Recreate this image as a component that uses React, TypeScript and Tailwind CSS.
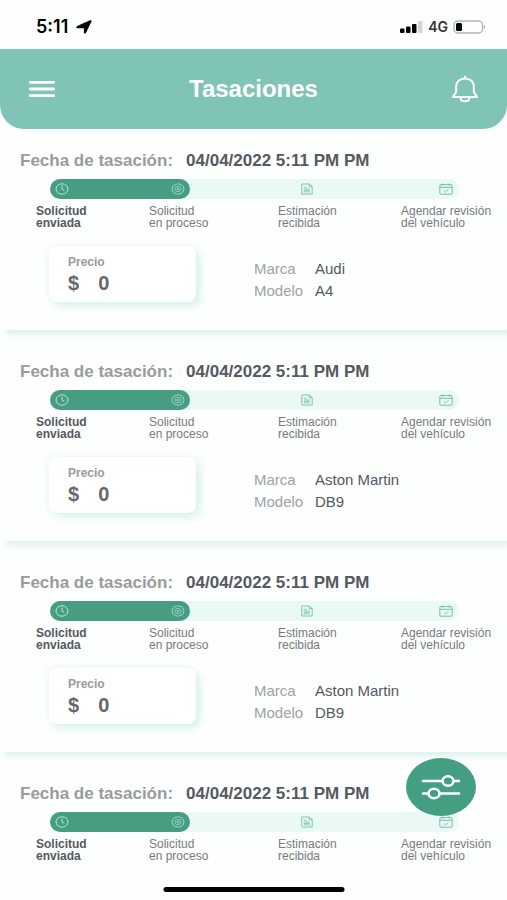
import type { ReactNode } from "react";

type Details = { price: number; brand: string; model: string };
type Appraisal = { id: number; date: string; details?: Details };

const appraisals: Appraisal[] = [
  { id: 1, date: "04/04/2022 5:11 PM PM", details: { price: 0, brand: "Audi", model: "A4" } },
  { id: 2, date: "04/04/2022 5:11 PM PM", details: { price: 0, brand: "Aston Martin", model: "DB9" } },
  { id: 3, date: "04/04/2022 5:11 PM PM", details: { price: 0, brand: "Aston Martin", model: "DB9" } },
  { id: 4, date: "04/04/2022 5:11 PM PM" },
];

const steps = [
  "Solicitud\nenviada",
  "Solicitud\nen proceso",
  "Estimación\nrecibida",
  "Agendar revisión\ndel vehículo",
];

function Icon({ children, className }: { children: ReactNode; className: string }) {
  return (
    <svg viewBox="0 0 14 12" fill="none" stroke="currentColor" className={`h-3 w-3.5 shrink-0 ${className}`} aria-hidden="true">
      {children}
    </svg>
  );
}

function ClockIcon() {
  return (
    <Icon className="text-[#b9e6d8]">
      <ellipse cx="7" cy="6" rx="6" ry="5.2" />
      <path d="M7 3v3.2l2 1" strokeLinecap="round" />
    </Icon>
  );
}

function GearIcon() {
  return (
    <Icon className="text-[#a6dccb]">
      <path d="M5.6 1.3 7 .6l1.4.7 1.9.1.8 1.4 1.6.9-.2 1.3.7 1-.7 1 .2 1.3-1.6.9-.8 1.4-1.9.1-1.4.7-1.4-.7-1.9-.1-.8-1.400-1.600-.9.2-1.300-.7-1 .7-1-.2-1.300 1.600-.9.8-1.400z" strokeWidth=".9" strokeLinejoin="round" />
      <ellipse cx="7" cy="6" rx="3.200" ry="2.700" strokeWidth=".7" />
      <ellipse cx="7" cy="6" rx="1.200" ry="1" strokeWidth=".8" />
    </Icon>
  );
}

function DocumentIcon() {
  return (
    <Icon className="text-[#72bfa8]">
      <path d="M1.8 1h7.5l2.9 2.5V11H1.8zM9.2 1v2.6h3" strokeWidth=".9" strokeLinejoin="round" />
      <path d="M3.8 4.3h3M3.8 6h6M3.8 7.4h6M3.8 8.8h6" strokeWidth=".8" />
    </Icon>
  );
}

function CalendarIcon() {
  return (
    <Icon className="text-[#72bfa8]">
      <rect x=".8" y="1.6" width="12.4" height="9.6" rx="1.2" />
      <path d="M1 4.3h12M3.8.4v2.2M10.2.4v2.2" />
      <path d="m4.8 7.5 1.6 1.4 3.2-2.6" strokeWidth=".9" />
    </Icon>
  );
}

function StatusBar() {
  return (
    <div className="flex h-[49px] shrink-0 items-center justify-between pr-[21px] pl-9 font-['Inter',sans-serif] text-black">
      <div className="flex items-center gap-2 pt-1">
        <span className="text-[18px] leading-5 font-semibold">5:11</span>
        <svg viewBox="0 0 16 14" className="h-3.5 w-4" aria-hidden="true">
          <path d="M15.5 1.4 9.9 12.900c-.5 1-2 .8-2-.4V8.200H1.700C.2 8.200 0 6.600 1.200 6.100L14 .3c1.100-.5 2 .2 1.500 1.100z" fill="currentColor" />
        </svg>
      </div>
      <div className="flex items-center gap-[5px] pt-1">
        <svg viewBox="0 0 23 12" className="h-3 w-[23px]" fill="currentColor" aria-hidden="true">
          <rect x="0" y="7.5" width="4.5" height="4.5" rx="1" />
          <rect x="6" y="5.5" width="4.5" height="6.5" rx="1" />
          <rect x="12" y="3" width="4.5" height="9" rx="1" />
          <rect x="18" y="0" width="4.5" height="12" rx="1" fill="#d5d5d5" />
        </svg>
        <span className="text-[14px] leading-4 font-semibold text-[#333]">4G</span>
        <svg viewBox="0 0 33 14" className="h-3.5 w-[33px]" aria-hidden="true">
          <rect x="1" y="1" width="28.5" height="12" rx="4" fill="none" stroke="#b5b5b5" strokeWidth="1.5" />
          <rect x="3" y="3" width="6" height="8" rx="1.5" fill="#000" />
          <path d="M31 5c1.8.7 1.8 3.3 0 4z" fill="#aaa" />
        </svg>
      </div>
    </div>
  );
}

function Header() {
  return (
    <header className="flex h-20 shrink-0 items-center justify-between rounded-b-3xl bg-[#7fc4b6] px-7 text-white">
      <button type="button" aria-label="Menú">
        <svg viewBox="0 0 28 18" className="h-[18px] w-7" stroke="currentColor" strokeWidth="2.8" strokeLinecap="round" aria-hidden="true">
          <path d="M2.300 2.300h23.400M2.300 9h23.400M2.300 15.700h23.400" />
        </svg>
      </button>
      <h1 className="text-[24px] leading-7 font-bold">Tasaciones</h1>
      <button type="button" aria-label="Notificaciones">
        <svg viewBox="0 0 28 28" className="size-7" fill="none" stroke="currentColor" strokeWidth="2" strokeLinecap="round" strokeLinejoin="round" aria-hidden="true">
          <path d="M14 3.400c-5.400 0-8.800 3.400-8.800 8v5.200c0 2-2.600 3-3.200 5.400h24c-.6-2.400-3.200-3.400-3.200-5.400v-5.200c0-4.600-3.400-8-8.800-8zM14 1.600v1.800M9.600 22.400c0 2.400 1.800 3.900 4.400 3.900s4.400-1.500 4.400-3.900" />
        </svg>
      </button>
    </header>
  );
}

function Progress() {
  return (
    <div className="mt-2">
      <div className="mr-12 ml-[50px] flex h-5 rounded-full bg-[#ebf9f6]">
        <div className="flex w-[140px] items-center justify-between rounded-full bg-[#469d81] px-[5px]">
          <ClockIcon />
          <GearIcon />
        </div>
        <div className="flex flex-1 items-center justify-between pr-1.5 pl-[27%]">
          <DocumentIcon />
          <CalendarIcon />
        </div>
      </div>
      <ol className="mt-1.5 mr-[15px] ml-9 grid grid-cols-[113fr_129fr_123fr_91fr] text-[12px] leading-3 whitespace-pre text-[#777a80]">
        {steps.map((label, index) => (
          <li key={label} className={index === 0 ? "font-bold text-[#555860]" : ""}>
            {label}
          </li>
        ))}
      </ol>
    </div>
  );
}

function VehicleDetails({ price, brand, model }: Details) {
  return (
    <div className="mt-[17px] flex items-center pb-7 pl-[49px]">
      <div className="h-14 w-[147px] rounded-lg bg-white px-[19px] pt-2.5 shadow-[4px_4px_8px_#d8f0ea,-2px_-2px_6px_#f1f9f7]">
        <p className="text-[12px] leading-3 font-bold text-[#999b9f]">Precio</p>
        <p className="mt-[3px] flex gap-[19px] text-[20px] leading-6 font-bold text-[#65676d]">
          <span>$</span>
          <span>{price}</span>
        </p>
      </div>
      <dl className="mt-3 ml-[58px] grid grid-cols-[61px_auto] text-[15px] leading-[22px]">
        <dt className="text-[#a0a2a6]">Marca</dt>
        <dd className="text-[#555862]">{brand}</dd>
        <dt className="text-[#a0a2a6]">Modelo</dt>
        <dd className="text-[#555862]">{model}</dd>
      </dl>
    </div>
  );
}

function AppraisalCard({ item }: { item: Appraisal }) {
  return (
    <article className="shrink-0 bg-[#fdfefe] pt-[22px] shadow-[6px_4px_6px_#dcf0eb]">
      <p className="flex gap-[13px] pl-5 text-[17px] leading-5 font-bold whitespace-nowrap">
        <span className="text-[#999b9f]">Fecha de tasación:</span>
        <time className="text-[#565960]">{item.date}</time>
      </p>
      <Progress />
      {item.details ? <VehicleDetails {...item.details} /> : <div className="h-28" />}
    </article>
  );
}

export default function App() {
  return (
    <div className="relative flex h-screen flex-col overflow-hidden bg-[#fdfefe] font-['Liberation_Sans',sans-serif]">
      <StatusBar />
      <Header />
      <main className="flex min-h-0 flex-1 flex-col gap-2.5 overflow-hidden">
        {appraisals.map((item) => (
          <AppraisalCard key={item.id} item={item} />
        ))}
      </main>
      <button type="button" aria-label="Filtros" className="absolute right-[31px] bottom-[84px] grid h-[58px] w-[70px] place-items-center rounded-[50%] bg-[#449e82] text-white">
        <svg viewBox="0 0 40 26" className="h-[26px] w-10" fill="none" stroke="currentColor" strokeWidth="2.6" strokeLinecap="round" aria-hidden="true">
          <path d="M2 7h19M33 7h5M2 19.500h5M19 19.500h19" />
          <ellipse cx="27" cy="7" rx="5.500" ry="4.800" />
          <ellipse cx="13" cy="19.500" rx="5.500" ry="4.800" />
        </svg>
      </button>
      <div className="absolute bottom-2 left-1/2 h-[5px] w-[181px] -translate-x-1/2 rounded-full bg-black" />
    </div>
  );
}
